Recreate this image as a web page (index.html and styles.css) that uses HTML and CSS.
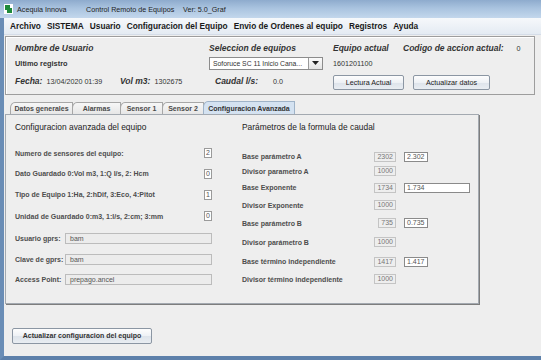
FILE: index.html
```html
<!DOCTYPE html>
<html lang="es">
	<head>
		<meta charset="UTF-8" />
		<title>Acequia Innova</title>
		<link rel="stylesheet" href="styles.css">
	</head>
	<body>
		<div class="window">
			<header class="titlebar">
				<svg class="app-icon" width="9" height="10" viewBox="0 0 9 10">
					<rect x="0" y="0" width="9" height="10" fill="#ffffff" />
					<path d="M1 1 L6 1 L6 4 L8 4 L8 9 L3 9 L3 6 L1 6 Z" fill="#1f8a3a" />
				</svg>
				<span class="t-app">Acequia Innova</span>
				<span class="t-name">Control Remoto de Equipos</span>
				<span>Ver:  5.0_Graf</span>
			</header>
			<div class="frame">
				<nav class="menubar">
					<span>Archivo</span>
					<span>SISTEMA</span>
					<span>Usuario</span>
					<span>Configuracion del Equipo</span>
					<span>Envio de Ordenes al equipo</span>
					<span>Registros</span>
					<span>Ayuda</span>
				</nav>
				<main class="content">
					<section class="summary">
						<div class="cap">Nombre de Usuario</div>
						<div class="cap">Seleccion de equipos</div>
						<div class="cap">Equipo actual</div>
						<div class="cap">Codigo de accion actual:<span class="code">0</span></div>

						<div class="sub">Ultimo registro</div>
						<div class="combo">
							<span class="combo-text">Soforuce SC 11 Inicio Cana...</span>
							<span class="combo-arrow">
								<svg width="7" height="4" viewBox="0 0 7 4"><path d="M0 0 H7 L3.5 4 Z" fill="#222" /></svg>
							</span>
						</div>
						<div class="val">1601201100</div>
						<div></div>

						<div class="reading">
							<span class="pair pair-date"><span class="cap">Fecha:</span><span class="val">13/04/2020 01:39</span></span>
							<span class="pair"><span class="cap">Vol m3:</span><span class="val">1302675</span></span>
						</div>
						<div class="reading flow">
							<span class="pair"><span class="cap">Caudal l/s:</span><span class="val">0.0</span></span>
						</div>
						<div><button class="btn btn-read">Lectura Actual</button></div>
						<div><button class="btn btn-update">Actualizar datos</button></div>
					</section>

					<div class="tabs">
						<span class="tab tab-1">Datos generales</span>
						<span class="tab tab-2">Alarmas</span>
						<span class="tab tab-3">Sensor 1</span>
						<span class="tab tab-4">Sensor 2</span>
						<span class="tab tab-5 active">Configuracion Avanzada</span>
					</div>
					<div class="tab-body">
						<div class="col-left">
							<h3>Configuracion avanzada del equipo</h3>
							<div class="rows">
								<div class="row"><span class="lbl">Numero de sensores del equipo:</span><span class="box">2</span></div>
								<div class="row"><span class="lbl">Dato Guardado 0:Vol m3, 1:Q l/s, 2: Hcm</span><span class="box">0</span></div>
								<div class="row"><span class="lbl">Tipo de Equipo 1:Ha, 2:hDif, 3:Eco, 4:Pitot</span><span class="box">1</span></div>
								<div class="row"><span class="lbl">Unidad de Guardado  0:m3, 1:l/s, 2:cm; 3:mm</span><span class="box">0</span></div>
								<div class="row"><span class="lbl">Usuario gprs:</span><span class="field">bam</span></div>
								<div class="row"><span class="lbl">Clave de gprs:</span><span class="field">bam</span></div>
								<div class="row"><span class="lbl">Access Point:</span><span class="field">prepago.ancel</span></div>
							</div>
						</div>
						<div class="col-right">
							<h3>Parámetros de la formula de caudal</h3>
							<div class="params">
								<span class="lbl">Base parámetro A</span><span class="num">2302</span><span class="edit">2.302</span>
								<span class="lbl">Divisor parametro A</span><span class="num">1000</span><span></span>
								<span class="lbl">Base Exponente</span><span class="num">1734</span><span class="edit edit-wide">1.734</span>
								<span class="lbl">Divisor Exponente</span><span class="num">1000</span><span></span>
								<span class="lbl">Base parámetro B</span><span class="num">735</span><span class="edit">0.735</span>
								<span class="lbl">Divisor parámetro B</span><span class="num">1000</span><span></span>
								<span class="lbl">Base término independiente</span><span class="num">1417</span><span class="edit">1.417</span>
								<span class="lbl">Divisor término independiente</span><span class="num">1000</span><span></span>
							</div>
						</div>
					</div>

					<div class="actions">
						<button class="btn btn-save">Actualizar configuracion del equipo</button>
					</div>
				</main>
			</div>
		</div>
	</body>
</html>
```

FILE: styles.css
```css
body,
html {
	margin: 0px;
	background: #eeeeee;
	font-family: "Liberation Sans", Arial, sans-serif;
	color: #333333;
}
.window {
	width: 541px;
	height: 360px;
	display: flex;
	flex-direction: column;
	overflow: hidden;
}
.titlebar {
	height: 18px;
	flex: none;
	display: flex;
	align-items: center;
	font-size: 7.2px;
	color: #1e1e1e;
	background: linear-gradient(#8eabcd 0%, #a9c3df 45%, #c3d7ec 100%);
}
.app-icon {
	margin: 0px 4px 0px 4px;
}
.t-app {
	width: 69px;
}
.t-name {
	width: 97px;
}
.frame {
	flex: 1;
	display: flex;
	flex-direction: column;
	border-left: 4px solid #6a8db6;
	border-bottom: 4px solid #5d80aa;
	background: #eeeeee;
}
.menubar {
	height: 16px;
	flex: none;
	display: flex;
	align-items: center;
	gap: 6px;
	padding-left: 6px;
	font-size: 8.3px;
	font-weight: bold;
	color: #1a1a1a;
	background: linear-gradient(#f6f8fb, #e4ebf3);
	border-bottom: 1px solid #d5dde8;
}
.content {
	flex: 1;
	display: flex;
	flex-direction: column;
	padding-left: 1px;
}

/* summary panel */
.summary {
	margin-top: 1px;
	width: 530px;
	box-sizing: border-box;
	border: 1px solid #9d9d9d;
	box-shadow: inset 1px 1px 0px #ffffff;
	padding: 5px 0px 5px 9px;
	display: grid;
	grid-template-columns: 194px 124px 70px 1fr;
	grid-template-rows: 12px 14px 17px;
	row-gap: 2px;
	align-items: center;
}
.cap {
	font-size: 8.5px;
	font-weight: bold;
	font-style: italic;
	color: #333333;
}
.sub {
	font-size: 7.4px;
	font-weight: bold;
	color: #333333;
}
.val {
	font-size: 7.2px;
	color: #333333;
}
.code {
	font-style: normal;
	font-weight: normal;
	font-size: 7.2px;
	margin-left: 13px;
}
.reading {
	display: flex;
	align-items: center;
}
.flow {
	padding-left: 6px;
}
.pair {
	display: flex;
	align-items: baseline;
	gap: 4px;
}
.pair-date {
	width: 105px;
}
.flow .pair {
	gap: 15px;
}
.combo {
	width: 114px;
	height: 13px;
	box-sizing: border-box;
	border: 1px solid #8c8c8c;
	background: #ffffff;
	display: flex;
	align-items: center;
}
.combo-text {
	flex: 1;
	font-size: 6.8px;
	padding-left: 3px;
	white-space: nowrap;
	overflow: hidden;
}
.combo-arrow {
	width: 13px;
	height: 100%;
	border-left: 1px solid #9a9a9a;
	display: flex;
	align-items: center;
	justify-content: center;
	background: linear-gradient(#fbfbfb, #e3e3e3);
}
.btn {
	font-family: "Liberation Sans", Arial, sans-serif;
	font-size: 7.2px;
	color: #222222;
	height: 15px;
	padding: 0px;
	border: 1px solid #8b96a3;
	border-radius: 2px;
	background: linear-gradient(#fdfdfd 0%, #eef1f5 50%, #dde3ea 51%, #e9edf2 100%);
}
.btn-read {
	width: 71px;
}
.btn-update {
	width: 77px;
	margin-left: 10px;
}

/* tabs */
.tabs {
	margin-top: 6px;
	padding-left: 5px;
	display: flex;
	align-items: flex-end;
	height: 13px;
}
.tab {
	height: 12px;
	box-sizing: border-box;
	border: 1px solid #a7a7a7;
	border-bottom: none;
	border-top-left-radius: 5px 6px;
	margin-right: -1px;
	font-size: 7px;
	font-weight: bold;
	color: #4a4a4a;
	display: flex;
	align-items: center;
	justify-content: center;
	background: linear-gradient(#f7f7f7, #e6e6e6);
}
.tab-1 { width: 63px; }
.tab-2 { width: 49px; }
.tab-3 { width: 43px; }
.tab-4 { width: 42px; }
.tab-5 { width: 92px; }
.tab.active {
	height: 13px;
	background: #d4e2f1;
	color: #333333;
	border-color: #9fb3c8;
}
.tab-body {
	width: 474px;
	height: 190px;
	box-sizing: border-box;
	border: 1px solid #a3a9b0;
	box-shadow: 1px 1px 0px #7d7d7d;
	padding: 7px 0px 0px 9px;
	display: flex;
	gap: 30px;
}
h3 {
	margin: 0px;
	height: 12px;
	font-size: 8.4px;
	font-weight: normal;
	color: #222222;
	white-space: nowrap;
}
.col-left {
	width: 202px;
}
.rows {
	margin-top: 9px;
	display: grid;
	grid-template-rows: 20px 21px 21px 22px 22px 20px 20px;
}
.row {
	display: flex;
	align-items: center;
	justify-content: space-between;
}
.lbl {
	font-size: 7px;
	font-weight: bold;
	color: #4d4d4d;
	white-space: nowrap;
}
.box {
	min-width: 5px;
	height: 10px;
	box-sizing: border-box;
	padding: 0px 1px;
	border: 1px solid #9a9a9a;
	background: #ffffff;
	font-size: 7px;
	line-height: 8px;
	text-align: right;
	color: #555555;
}
.field {
	width: 147px;
	height: 11px;
	box-sizing: border-box;
	border: 1px solid #bcbcbc;
	background: #ececec;
	padding-left: 4px;
	font-size: 7px;
	line-height: 9px;
	color: #555555;
}
.params {
	margin-top: 16px;
	display: grid;
	grid-template-columns: 120px 26px 74px;
	grid-template-rows: 13px 16px 17px 18px 18px 20px 19px 16px;
	column-gap: 8px;
	align-items: center;
}
.num {
	justify-self: end;
	height: 10px;
	box-sizing: border-box;
	padding: 0px 2px;
	border: 1px solid #c4c4c4;
	background: #eeeeee;
	font-size: 7px;
	line-height: 8px;
	color: #777777;
}
.edit {
	justify-self: start;
	height: 10px;
	box-sizing: border-box;
	padding: 0px 2px;
	border: 1px solid #8a8a8a;
	background: #ffffff;
	font-size: 7px;
	line-height: 8px;
	color: #555555;
}
.edit-wide {
	width: 66px;
}

/* footer */
.actions {
	padding: 20px 0px 0px 7px;
}
.btn-save {
	width: 140px;
	height: 16px;
	font-weight: bold;
	font-size: 7px;
	color: #333333;
}
```
